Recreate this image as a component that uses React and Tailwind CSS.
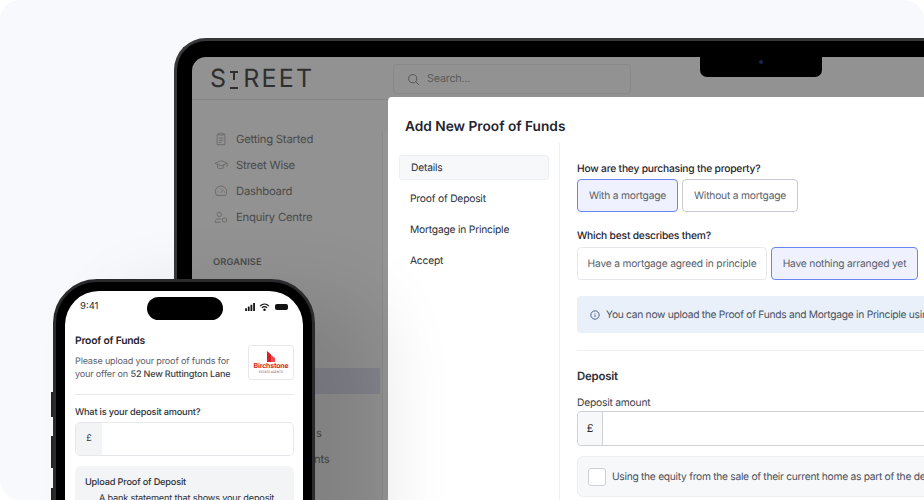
import React from 'react'

const sans = "font-['Inter',sans-serif] [text-rendering:geometricPrecision]"

const navItems = [
  { label: 'Getting Started', icon: 'clipboard' },
  { label: 'Street Wise', icon: 'cap' },
  { label: 'Dashboard', icon: 'gauge' },
  { label: 'Enquiry Centre', icon: 'people' },
]

function NavIcon({ name }) {
  return (
    <svg viewBox="0 0 16 16" fill="none" stroke="#686868" strokeWidth="1" className="w-[14px] h-[14px] shrink-0">
      {name === 'clipboard' && <path d="M5 2.5H3.5v12h9v-12H11M5.5 1.5h5v2h-5zM5.500 7h5M5.500 9.500h5M5.500 12h3" />}
      {name === 'cap' && <path d="M1 6l7.500-3L15 6l-6.500 3zM4 7.500V11c2 1.500 5 1.500 7 0V7.500M15 6v4" />}
      {name === 'gauge' && <path d="M3 13a6.500 6.500 0 1 1 10 0zM8 10l2.500-3.500M4 9h1M11.500 9h1M8 5v1" />}
      {name === 'people' && <path d="M6 7.500a2.500 2.500 0 1 0 0-5 2.500 2.500 0 0 0 0 5zM1.500 14v-1c0-2 2-3 4.500-3 1 0 2 .2 2.500.5M1.500 14h6M12 14a2.500 2.500 0 1 0 0-5 2.500 2.500 0 0 0 0 5z" />}
    </svg>
  )
}

function Logo() {
  return (
    <div className={`${sans} flex items-center w-[183px] ml-[-1px] text-[25px] leading-none tracking-[2.2px] text-[#2f2f2f]`}>
      <span className="mr-[2px]">S</span>
      <svg viewBox="0 0 8 18" fill="#2f2f2f" className="w-[8px] h-[18px] mr-[5px]">
        <rect x="0" y="0" width="8" height="2" />
        <rect x="3" y="0" width="2" height="9" />
        <rect x="0" y="16" width="8" height="2" />
      </svg>
      <span>REET</span>
    </div>
  )
}

function Laptop() {
  return (
    <div className="absolute left-[174px] top-[38px] w-[800px] h-[520px] rounded-[32px] bg-black border-t-[3px] border-l-[3px] border-[#38383a] pt-[16px] pl-[15px]">
      <div className="relative w-full h-full rounded-[14px] bg-[#929292] overflow-hidden">
        <div className="flex items-center h-[43px] border-b border-[#858585] pl-[19px] pt-[3px]">
          <Logo />
          <div className="flex items-center gap-[7px] w-[238px] h-[30px] mt-[-1px] rounded-[4px] border border-[#898989] pl-[13px] pt-px">
            <svg viewBox="0 0 16 16" fill="none" stroke="#555" strokeWidth="1.200" className="w-[13px] h-[13px]">
              <circle cx="7" cy="7" r="5" />
              <path d="M11 11l4 4" />
            </svg>
            <span className={`${sans} text-[10.800px] tracking-[-0.02em] text-[#5c5c5c]`}>Search...</span>
          </div>
        </div>

        <div className="flex flex-col gap-[8px] pl-[22px] pt-[30px]">
          {navItems.map(item => (
            <div key={item.label} className={`${sans} flex items-center gap-[8px] h-[18px] text-[11.300px] tracking-[-0.02em] text-[#4a4a4a]`}>
              <NavIcon name={item.icon} />
              <span>{item.label}</span>
            </div>
          ))}
        </div>
        <p className={`${sans} pl-[21px] mt-[29px] text-[9.300px] leading-[15px] font-semibold tracking-[0.01em] text-[#4a4a4a]`}>ORGANISE</p>

        <div className="absolute left-[190px] top-[75px] w-[20px] h-[400px] bg-[#959595] border-l border-[#8a8a8a]" />
        <div className="absolute left-0 top-[311px] w-[188px] h-[26px] bg-[#83848c]" />
        <span className={`${sans} absolute left-[124px] top-[368px] text-[11.300px] leading-[16px] text-[#4a4a4a]`}>s</span>
        <span className={`${sans} absolute left-[122px] top-[394px] text-[11.300px] leading-[16px] tracking-[-0.02em] text-[#4a4a4a]`}>nts</span>
      </div>

      <div className="absolute left-[523px] top-[10px] w-[122px] h-[26px] rounded-b-[7px] bg-black flex items-start justify-center pt-[8px]">
        <span className="mt-[1px] w-[4px] h-[4px] rounded-full bg-[#16264f]" />
      </div>
    </div>
  )
}

function Modal() {
  return (
    <div className={`${sans} absolute left-[388px] top-[97px] w-[560px] h-[420px] bg-white rounded-tl-[4px] overflow-hidden`}>
      <h1 className="pl-[17px] pt-[21px] text-[13.700px] leading-[18px] font-semibold text-[#1f2430]">Add New Proof of Funds</h1>

      <div className="flex mt-[7px]">
        <div className="w-[172px] shrink-0 pl-[11px] pt-[12px] border-r border-[#eef0f3] h-[360px]">
          <div className="flex flex-col gap-[6px] w-[150px] text-[10.250px] tracking-[-0.02em] text-[#2c3038]">
            <div className="h-[25px] flex items-center pl-[11px] pt-[2px] rounded-[3px] bg-[#f7f8fa] border border-[#eceef2]">Details</div>
            <div className="h-[25px] flex items-center pl-[11px] pt-[2px]">Proof of Deposit</div>
            <div className="h-[25px] flex items-center pl-[11px] pt-[2px]">Mortgage in Principle</div>
            <div className="h-[25px] flex items-center pl-[11px] pt-[2px]">Accept</div>
          </div>
        </div>

        <div className="flex-1 min-w-0 pl-[17px] pt-[18px] text-[10.250px] tracking-[-0.02em]">
          <p className="h-[14px] pt-px font-medium leading-[14px] text-[#1f2430]">How are they purchasing the property?</p>
          <div className="flex gap-[4px] mt-[4px] text-[#5a5f6b]">
            <div className="h-[33px] w-[101px] flex items-center justify-center pt-[2px] rounded-[4px] border border-[#6b85f0] bg-[#eff2fe]">With a mortgage</div>
            <div className="h-[33px] w-[116px] flex items-center justify-center pt-[2px] rounded-[4px] border border-[#c8cad2]">Without a mortgage</div>
          </div>

          <p className="h-[14px] pt-px mt-[16px] font-medium leading-[14px] text-[#1f2430]">Which best describes them?</p>
          <div className="flex gap-[4px] mt-[5px] text-[#5a5f6b]">
            <div className="h-[33px] w-[190px] flex items-center justify-center pt-[2px] rounded-[4px] border border-[#e6e8ec]">Have a mortgage agreed in principle</div>
            <div className="h-[33px] w-[147px] flex items-center justify-center pt-[2px] rounded-[4px] border border-[#6b85f0] bg-[#eff2fe]">Have nothing arranged yet</div>
          </div>

          <div className="flex items-center gap-[6px] mt-[16px] h-[37px] pl-[13px] rounded-l-[4px] bg-[#e9f0fa] text-[#4a505c] tracking-[-0.028em] whitespace-nowrap">
            <svg viewBox="0 0 12 12" fill="none" stroke="#2c4a7c" strokeWidth="1" className="w-[10px] h-[10px] shrink-0">
              <circle cx="6" cy="6" r="5" />
              <path d="M6 5.500v3M6 3.500v.8" />
            </svg>
            <span className="pt-[2px]">You can now upload the Proof of Funds and Mortgage in Principle using the Street app</span>
          </div>

          <div className="mt-[17px] h-px bg-[#eef0f3]" />

          <h2 className="mt-[17px] text-[11.400px] leading-[16px] font-semibold text-[#2c3038]">Deposit</h2>
          <p className="h-[14px] pt-px mt-[11px] leading-[14px] text-[#3a3f4a]">Deposit amount</p>
          <div className="flex mt-[2px] h-[35px] rounded-[4px] border border-[#cfd1d6]">
            <div className="w-[25px] flex items-center justify-center bg-[#f7f8fa] border-r border-[#cfd1d6] rounded-l-[4px] text-[11px] text-[#2c3038]">£</div>
          </div>

          <div className="flex items-center gap-[6px] mt-[10px] h-[41px] pl-[10px] rounded-l-[6px] bg-[#f7f8fa] border border-[#eceef2] text-[#4a505c] tracking-[-0.028em] whitespace-nowrap">
            <span className="w-[18px] h-[18px] shrink-0 rounded-[3px] bg-white border border-[#cfd1d6]" />
            <span className="pt-[2px]">Using the equity from the sale of their current home as part of the deposit</span>
          </div>
        </div>
      </div>
    </div>
  )
}

function Phone() {
  return (
    <div className="absolute left-[53px] top-[279px] w-[262px] h-[300px] rounded-[44px] bg-black border-[3px] border-[#2b2b2d] p-[9px] shadow-[60px_20px_80px_rgba(0,0,0,0.12)]">
      <div className="absolute left-[-5px] top-[110px] w-[2px] h-[25px] bg-[#222]" />
      <div className="absolute left-[-5px] top-[154px] w-[2px] h-[32px] bg-[#222]" />
      <div className="absolute left-[-5px] top-[206px] w-[2px] h-[32px] bg-[#222]" />
      <div className={`${sans} relative w-full h-full rounded-[34px] bg-white overflow-hidden`}>
        <div className="flex items-center justify-between h-[30px] pt-px px-[15px]">
          <span className="pt-[2px] text-[9.500px] text-[#2c3038]">9:41</span>
          <div className="flex items-center gap-[3px]">
            <svg viewBox="0 0 12 9" fill="#111" className="w-[11px] h-[8px]">
              <rect x="0" y="6" width="2" height="3" />
              <rect x="3" y="4" width="2" height="5" />
              <rect x="6" y="2" width="2" height="7" />
              <rect x="9" y="0" width="2" height="9" />
            </svg>
            <svg viewBox="0 0 12 9" fill="none" stroke="#111" strokeWidth="1.400" className="w-[11px] h-[8px]">
              <path d="M1 3.500c3-3 7-3 10 0M3 5.500c2-1.800 4-1.800 6 0" />
              <circle cx="6" cy="7.500" r=".7" fill="#111" />
            </svg>
            <span className="ml-[2px] w-[13px] h-[6px] rounded-[2px] bg-[#111]" />
          </div>
        </div>

        <div className="absolute left-[82px] top-[6px] w-[76px] h-[23px] rounded-full bg-black" />

        <div className="pl-[10px] pr-[9px] pt-[13px]">
          <div className="flex justify-between">
            <div>
              <p className="text-[10.300px] leading-[14px] tracking-[-0.02em] font-semibold text-[#1f2430]">Proof of Funds</p>
              <p className="mt-[7px] text-[9.100px] leading-[13px] tracking-[-0.02em] text-[#5a606c]">
                Please upload your proof of funds for<br />
                your offer on <span className="font-medium text-[#3a3f4a]">52 New Ruttington Lane</span>
              </p>
            </div>
            <div className="mt-[11px] w-[46px] h-[35px] rounded-[3px] border border-[#e6e8ec] flex flex-col items-center pt-[5px]">
              <svg viewBox="0 0 8 11" className="w-[8px] h-[11px]">
                <path d="M0 0l4 3.500V11H0z" fill="#d81f26" />
                <path d="M4 4l4 3v4H4z" fill="#ef4a50" />
              </svg>
              <span className="text-[6.900px] leading-[8px] font-bold tracking-[-0.02em] text-[#d81f26]">Birchstone</span>
              <span className="text-[3px] leading-[4px] text-[#8a3a3d]">ESTATE AGENTS</span>
            </div>
          </div>

          <div className="mt-[13px] h-px bg-[#e6e8ec]" />

          <p className="mt-[10px] h-[14px] pt-px text-[9.200px] leading-[14px] tracking-[-0.02em] font-medium text-[#2c3038]">What is your deposit amount?</p>
          <div className="flex mt-[3px] h-[34px] rounded-[5px] border border-[#e6e8ec] overflow-hidden">
            <div className="w-[26px] flex items-center justify-center bg-[#f3f4f6] text-[9px] text-[#2c3038]">£</div>
          </div>

          <div className="mt-[10px] h-[80px] rounded-[6px] bg-[#f3f4f6] px-[10px] pt-[10px] text-[9.200px] leading-[14px] tracking-[-0.02em] text-[#2c3038]">
            <p className="font-medium">Upload Proof of Deposit</p>
            <p className="mt-[2px] pl-[14px] whitespace-nowrap">A bank statement that shows your deposit</p>
          </div>
        </div>
      </div>
    </div>
  )
}

export default function App() {
  return (
    <div className="relative w-[924px] h-[500px] overflow-hidden bg-white">
      <div className="absolute inset-0 rounded-[20px] bg-[#f8f9fc]" />
      <Laptop />
      <Modal />
      <Phone />
    </div>
  )
}
